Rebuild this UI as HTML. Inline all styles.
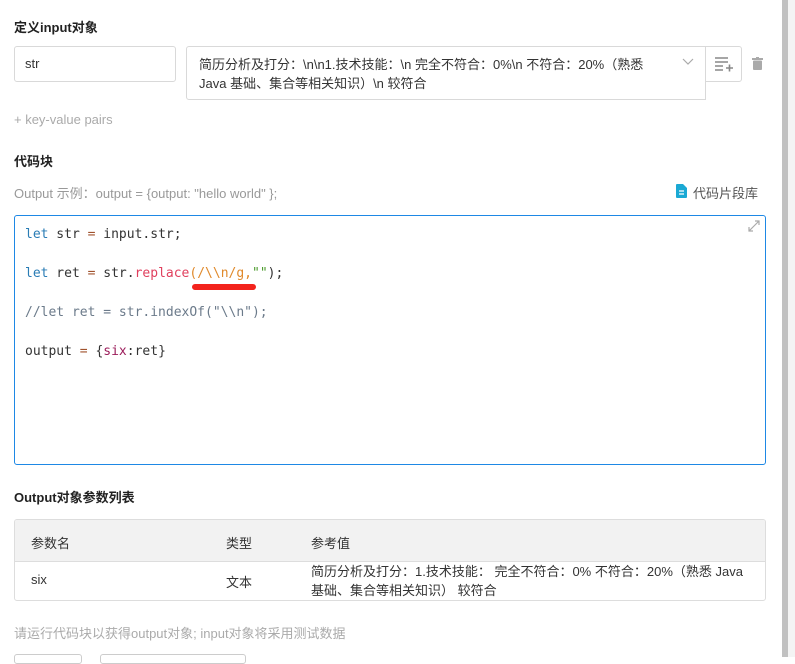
<!DOCTYPE html>
<html><head><meta charset="utf-8"><style>
*{box-sizing:border-box;margin:0;padding:0}
body{width:795px;height:657px;overflow:hidden;background:#fff;font-family:"Liberation Sans","Noto Sans CJK SC",sans-serif;font-size:13px;color:#333;position:relative}
.a{position:absolute}
.t{font-weight:bold;font-size:13px;color:#222}
.mono{font-family:"DejaVu Sans Mono","Liberation Mono",monospace;font-size:13px;color:#333;white-space:pre}
</style></head><body>
<div class="a t" style="left:14px;top:17px">定义input对象</div>
<div class="a" style="left:14px;top:46px;width:162px;height:36px;border:1px solid #d9d9d9;border-radius:3px;padding:9px 10px;color:#333">str</div>
<div class="a" style="left:186px;top:46px;width:520px;height:54px;border:1px solid #d9d9d9;border-radius:3px 0 0 3px;padding:8px 12px;line-height:19px;font-size:13px;color:#333;white-space:nowrap">简历分析及打分：\n\n1.技术技能：\n 完全不符合：0%\n 不符合：20%（熟悉<br>Java 基础、集合等相关知识）\n 较符合</div>
<svg class="a" style="left:682px;top:58px" width="12" height="8" viewBox="0 0 12 8"><path d="M1 1l5 5 5-5" fill="none" stroke="#aaa" stroke-width="1.2"/></svg>
<div class="a" style="left:705px;top:46px;width:37px;height:36px;border:1px solid #d9d9d9;border-radius:0 3px 3px 0"></div>
<svg class="a" style="left:715px;top:56px" width="18" height="16" viewBox="0 0 18 16"><path d="M0 2h13M0 6h13M0 10h8M0 14h8M11 12h7M14.5 8.5v7" stroke="#888" stroke-width="1.6"/></svg>
<svg class="a" style="left:752px;top:57px" width="11" height="13" viewBox="0 0 11 13"><rect x="0" y="1" width="11" height="2" fill="#aaa"/><rect x="4" y="0" width="3" height="2" fill="#aaa"/><rect x="1" y="3.5" width="9" height="9.5" rx="1" fill="#aaa"/></svg>
<div class="a" style="left:14px;top:112px;color:#aaa">+ key-value pairs</div>
<div class="a t" style="left:14px;top:151px">代码块</div>
<div class="a" style="left:14px;top:183px;color:#999">Output 示例：output = {output: "hello world" };</div>
<svg class="a" style="left:676px;top:184px" width="11" height="14" viewBox="0 0 11 14"><path d="M0 1a1 1 0 0 1 1-1h6l4 4v9a1 1 0 0 1-1 1H1a1 1 0 0 1-1-1z" fill="#1aa9d4"/><path d="M3 7h5M3 10h5" stroke="#fff" stroke-width="1.2"/></svg>
<div class="a" style="left:693px;top:183px;color:#555">代码片段库</div>
<div class="a" style="left:14px;top:215px;width:752px;height:250px;border:1px solid #1e88e5;border-radius:3px"></div>
<svg class="a" style="left:748px;top:220px" width="12" height="12" viewBox="0 0 12 12"><path d="M1 11L11 1M7 1h4v4M1 7v4h4" fill="none" stroke="#aaa" stroke-width="1.2"/></svg>
<div class="a mono" style="left:25px;top:227px"><span style="color:#2a7cb5">let</span> str <span style="color:#a0522d">=</span> input.str;</div>
<div class="a mono" style="left:25px;top:266px"><span style="color:#2a7cb5">let</span> ret <span style="color:#a0522d">=</span> str.<span style="color:#e0405e">replace</span><span style="color:#e08a2c">(/\\n/g,</span><span style="color:#4a9a2a">""</span>);</div>
<div class="a" style="left:192px;top:284px;width:64px;height:6px;background:#f3231d;border-radius:3px"></div>
<div class="a mono" style="left:25px;top:305px;color:#6b7a8a">//let ret = str.indexOf("\\n");</div>
<div class="a mono" style="left:25px;top:344px">output <span style="color:#a0522d">=</span> {<span style="color:#9b1c5a">six</span>:ret}</div>
<div class="a t" style="left:14px;top:487px">Output对象参数列表</div>
<div class="a" style="left:14px;top:519px;width:752px;height:82px;border:1px solid #ddd;border-radius:3px;overflow:hidden">
<div style="height:42px;background:#f2f2f2;border-bottom:1px solid #ddd"></div></div>
<div class="a" style="left:31px;top:533px;color:#333">参数名</div>
<div class="a" style="left:226px;top:533px">类型</div>
<div class="a" style="left:311px;top:533px">参考值</div>
<div class="a" style="left:31px;top:572px">six</div>
<div class="a" style="left:226px;top:572px">文本</div>
<div class="a" style="left:311px;top:562px;line-height:19px;font-size:13px;white-space:nowrap">简历分析及打分：1.技术技能： 完全不符合：0% 不符合：20%（熟悉 Java<br>基础、集合等相关知识） 较符合</div>
<div class="a" style="left:14px;top:623px;color:#aaa">请运行代码块以获得output对象; input对象将采用测试数据</div>
<div class="a" style="left:14px;top:654px;width:68px;height:10px;border:1px solid #ccc;border-radius:3px"></div>
<div class="a" style="left:100px;top:654px;width:146px;height:10px;border:1px solid #ccc;border-radius:3px"></div>
<div class="a" style="left:782px;top:0;width:6px;height:657px;background:#c1c1c1"></div>
<div class="a" style="left:788px;top:0;width:7px;height:657px;background:#f4f4f4"></div>
</body></html>
